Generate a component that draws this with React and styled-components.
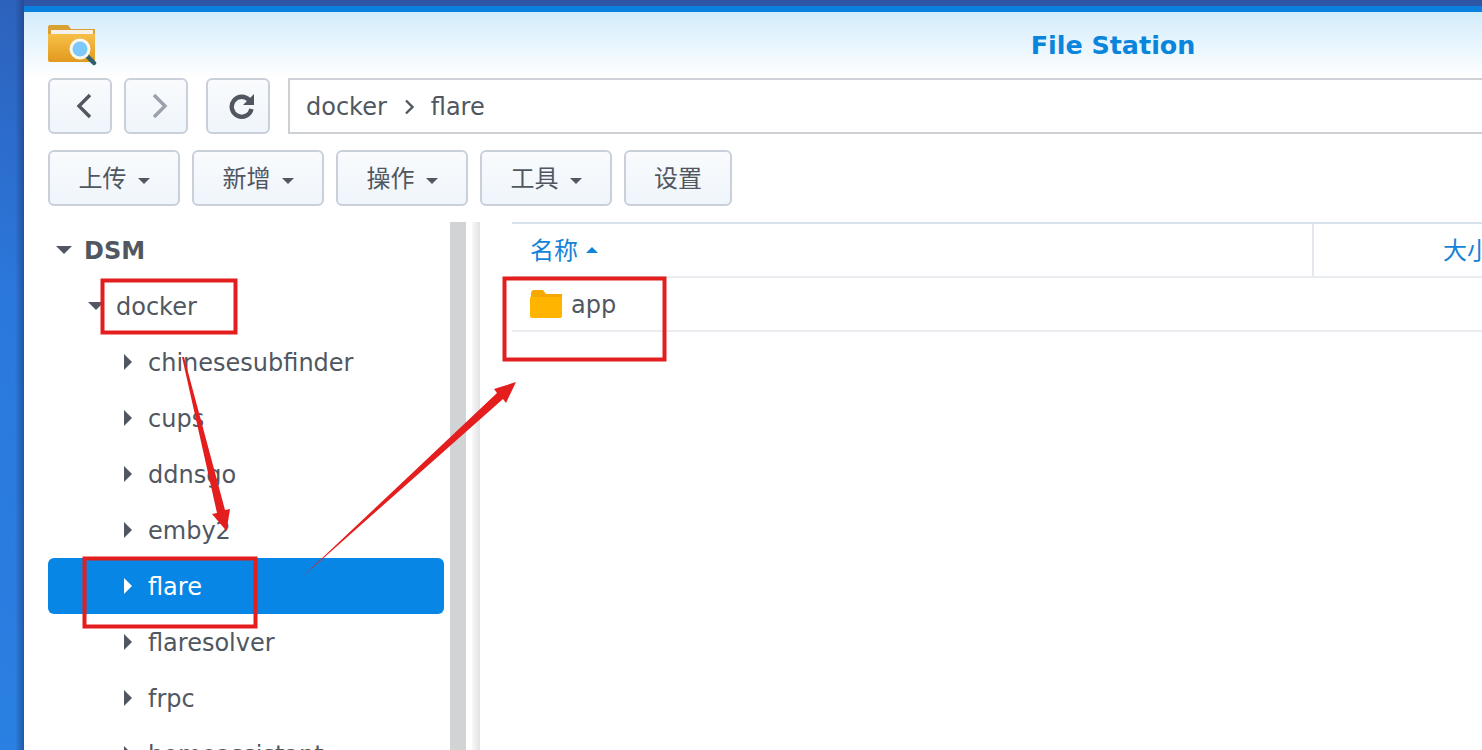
import React from "react";
import styled, { createGlobalStyle } from "styled-components";

const FONT = `"DejaVu Sans", "Noto Sans CJK SC", sans-serif`;
const TEXT = "#505761";
const RED = "#e41e1e";

const folders = ["chinesesubfinder", "cups", "ddnsgo", "emby2", "flare", "flaresolver", "frpc", "homeassistant"];
const toolbar = ["上传", "新增", "操作", "工具"];

export default function App() {
  return (
    <Page>
      <GlobalStyle />
      <Window>
        <TitleBar>
          <FileStationIcon />
          <Title>File Station</Title>
        </TitleBar>
        <NavRow>
          <NavGroup>
            <NavButton>
              <svg width="20" height="28" viewBox="0 0 20 28">
                <path d="M16 3 L5 14 L16 25" fill="none" stroke="#505761" strokeWidth="3.4" />
              </svg>
            </NavButton>
            <NavButton>
              <svg width="20" height="28" viewBox="0 0 20 28">
                <path d="M4 3 L15 14 L4 25" fill="none" stroke="#9aa1aa" strokeWidth="3.4" />
              </svg>
            </NavButton>
          </NavGroup>
          <NavButton>
            <svg width="28" height="28" viewBox="0 0 28 28">
              <path d="M21.5 8.5 A10 10 0 1 0 23.5 17" fill="none" stroke="#505761" strokeWidth="4.4" />
              <path d="M26 2 V13 H15 Z" fill="#505761" />
            </svg>
          </NavButton>
          <AddressBar>
            docker
            <svg width="12" height="16" viewBox="0 0 12 16">
              <path d="M3 1.5 L9.5 8 L3 14.5" fill="none" stroke="#505761" strokeWidth="2.4" />
            </svg>
            flare
          </AddressBar>
        </NavRow>
        <Toolbar>
          {toolbar.map((label) => (
            <ToolButton key={label} $width={132}>
              <ToolLabel>{label}</ToolLabel>
              <ToolCaret />
            </ToolButton>
          ))}
          <ToolButton $width={108}>
            <ToolLabel>设置</ToolLabel>
          </ToolButton>
        </Toolbar>
        <Body>
          <Tree>
            <TreeRow>
              <CaretCell>
                <Caret $large />
              </CaretCell>
              <RootLabel>DSM</RootLabel>
            </TreeRow>
            <TreeRow $level={1}>
              <CaretCell>
                <Caret $large />
              </CaretCell>
              <TreeLabel>docker</TreeLabel>
            </TreeRow>
            {folders.map((name) => (
              <TreeRow key={name} $level={2} $selected={name === "flare"}>
                <CaretCell>
                  <RightCaret $selected={name === "flare"} />
                </CaretCell>
                <TreeLabel>{name}</TreeLabel>
              </TreeRow>
            ))}
          </Tree>
          <ScrollBar />
          <Splitter />
          <List>
            <ListHeader>
              <NameColumn>
                <ToolLabel>名称</ToolLabel>
                <SortCaret />
              </NameColumn>
              <SizeColumn>
                <ToolLabel>大小</ToolLabel>
              </SizeColumn>
            </ListHeader>
            <FileRow>
              <svg width="32" height="28" viewBox="0 0 32 28">
                <path d="M1 4 Q1 0 4 0 H13 L16 4 H32 V7 H1 Z" fill="#f5a800" />
                <path d="M0 7 H32 V26 Q32 28 30 28 H2 Q0 28 0 26 Z" fill="#ffb400" />
              </svg>
              <TreeLabel>app</TreeLabel>
            </FileRow>
          </List>
        </Body>
      </Window>
      <Annotations viewBox="0 0 1482 750">
        <rect x="102.5" y="280.5" width="133" height="52" fill="none" stroke={RED} strokeWidth="4" />
        <rect x="504.5" y="278.5" width="160" height="81" fill="none" stroke={RED} strokeWidth="4" />
        <rect x="84.5" y="558.5" width="171" height="68" fill="none" stroke={RED} strokeWidth="4" />
        <polygon points="182,357 184,357 225,510 230,509 226.5,531 212,514 217,513" fill={RED} />
        <polygon points="301,578 497,393 494,389 516,382 506,403 503,399" fill={RED} />
      </Annotations>
    </Page>
  );
}

function FileStationIcon() {
  return (
    <svg width="50" height="42" viewBox="0 0 50 42">
      <defs>
        <linearGradient id="folderBody" x1="0" y1="0" x2="0" y2="1">
          <stop offset="0" stopColor="#f8bf48" />
          <stop offset="1" stopColor="#e09a1e" />
        </linearGradient>
      </defs>
      <path d="M0 3 Q0 1 2 1 H20 L23 5 H47 V12 H0 Z" fill="#d9a032" />
      <rect x="3" y="6" width="42" height="6" fill="#f4f1ea" />
      <path d="M0 10 L47 10 V36 Q47 38 45 38 H2 Q0 38 0 36 Z" fill="url(#folderBody)" />
      <path d="M38 31 L46 39" stroke="#2f5f70" strokeWidth="4.5" strokeLinecap="round" />
      <circle cx="32" cy="25" r="9" fill="#7cc8fb" stroke="#fbf7ea" strokeWidth="3" />
    </svg>
  );
}

const GlobalStyle = createGlobalStyle`
  html, body {
    margin: 0;
    height: 100%;
    overflow: hidden;
  }
`;

const Page = styled.div`
  position: relative;
  width: 1482px;
  height: 750px;
  overflow: hidden;
  padding: 6px 0 0 24px;
  box-sizing: border-box;
  background:
    linear-gradient(90deg, transparent 15px, rgba(25, 50, 110, 0.5) 24px),
    linear-gradient(180deg, #2d62bc 0, #2b78dc 300px, #2a80e2 750px);
  font-family: ${FONT};
  font-size: 24px;
  color: ${TEXT};
`;

const Window = styled.div`
  width: 2178px;
  height: 744px;
  border-top: 6px solid #0a80de;
  box-shadow: 0 -6px 0 #2f56a6;
  background: linear-gradient(180deg, #d2ecfb 0%, #ffffff 100%) top / 100% 66px no-repeat, #fff;
`;

const TitleBar = styled.div`
  display: grid;
  grid-template-columns: 1fr auto 1fr;
  align-items: center;
  height: 66px;
  padding: 0 24px;
`;

const Title = styled.div`
  font-size: 25.4px;
  font-weight: 700;
  color: #0a85dc;
`;

const NavRow = styled.div`
  display: flex;
  height: 56px;
  padding-left: 24px;
  gap: 18px;
`;

const NavGroup = styled.div`
  display: flex;
  gap: 12px;
`;

const NavButton = styled.div`
  display: flex;
  align-items: center;
  justify-content: center;
  width: 64px;
  height: 56px;
  box-sizing: border-box;
  padding-left: 8px;
  border: 2px solid #c9d0d9;
  border-radius: 6px;
  background: linear-gradient(180deg, #f9fbfd, #eff5fb);
`;

const AddressBar = styled.div`
  display: flex;
  flex: 1;
  align-items: center;
  gap: 16px;
  height: 56px;
  box-sizing: border-box;
  padding: 2px 0 0 16px;
  border: 2px solid #cdd1d6;
  background: #fff;
`;

const Toolbar = styled.div`
  display: flex;
  gap: 12px;
  padding: 16px 0 0 24px;
`;

const ToolButton = styled.div`
  display: flex;
  align-items: center;
  justify-content: center;
  gap: 11px;
  width: ${(p) => p.$width}px;
  height: 56px;
  box-sizing: border-box;
  border: 2px solid #c9d0d9;
  border-radius: 6px;
  background: linear-gradient(180deg, #f9fbfd, #eff5fb);
`;

const ToolLabel = styled.span`
  padding-bottom: 3px;
`;

const Caret = styled.span`
  display: block;
  width: 0;
  height: 0;
  border-style: solid;
  border-color: ${TEXT} transparent transparent;
  border-width: ${(p) => (p.$large ? "8px 8px 0" : "6px 6.5px 0")};
`;

const ToolCaret = styled(Caret)`
  margin-top: 5px;
`;

const RightCaret = styled.span`
  display: block;
  width: 0;
  height: 0;
  border-style: solid;
  border-color: transparent transparent transparent ${(p) => (p.$selected ? "#fff" : TEXT)};
  border-width: 8px 0 8px 8px;
`;

const SortCaret = styled.span`
  display: inline-block;
  width: 0;
  height: 0;
  border-style: solid;
  border-color: transparent transparent #1583d8;
  border-width: 0 6.5px 6px;
`;

const Body = styled.div`
  display: flex;
  height: 528px;
  margin-top: 16px;
  padding-left: 24px;
  overflow: hidden;
`;

const Tree = styled.div`
  flex: none;
  width: 396px;
`;

const TreeRow = styled.div`
  display: flex;
  align-items: center;
  gap: 4px;
  height: 56px;
  padding-left: ${(p) => (p.$level || 0) * 32}px;
  border-radius: 6px;
  background: ${(p) => (p.$selected ? "#0786e6" : "transparent")};
  color: ${(p) => (p.$selected ? "#fff" : TEXT)};
`;

const CaretCell = styled.span`
  display: flex;
  flex: none;
  align-items: center;
  justify-content: center;
  width: 32px;
`;

const TreeLabel = styled.span`
  padding-top: 2px;
`;

const RootLabel = styled(TreeLabel)`
  font-weight: 700;
`;

const ScrollBar = styled.div`
  flex: none;
  width: 16px;
  margin-left: 6px;
  background: #d1d3d5;
`;

const Splitter = styled.div`
  flex: none;
  width: 8px;
  margin-left: 6px;
  background: linear-gradient(90deg, #f8f8f8, #e2e2e2);
`;

const List = styled.div`
  flex: 1;
  margin-left: 32px;
`;

const ListHeader = styled.div`
  display: flex;
  height: 52px;
  border-top: 2px solid #d7e2ec;
  border-bottom: 2px solid #e9ecf0;
  color: #1583d8;
`;

const NameColumn = styled.div`
  display: flex;
  align-items: center;
  gap: 8px;
  width: 802px;
  box-sizing: border-box;
  padding-left: 18px;
  border-right: 2px solid #e4e9ef;
`;

const SizeColumn = styled.div`
  display: flex;
  align-items: center;
  padding-left: 129px;
`;

const FileRow = styled.div`
  display: flex;
  align-items: center;
  gap: 9px;
  height: 52px;
  padding-left: 18px;
  border-bottom: 2px solid #e9ecf0;
`;

const Annotations = styled.svg`
  position: absolute;
  top: 0;
  left: 0;
  width: 1482px;
  height: 750px;
  pointer-events: none;
`;
